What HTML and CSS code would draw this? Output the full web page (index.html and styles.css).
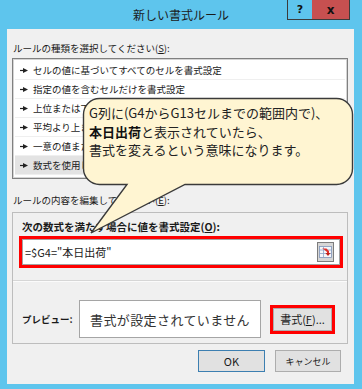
FILE: index.html
```html
<!DOCTYPE html>
<html lang="ja">
<head>
<meta charset="utf-8">
<title>新しい書式ルール</title>
<link rel="stylesheet" href="styles.css">
</head>
<body>
<div class="titlebar">
  <div class="title">新しい書式ルール</div>
  <div class="caption">
    <span class="help">?</span>
    <span class="close">x</span>
  </div>
</div>
<div class="dialog">
  <div class="label">ルールの種類を選択してください(<u>S</u>):</div>
  <div class="listbox">
    <div class="row"><svg class="arr" width="8" height="5" viewBox="0 0 8 5"><path d="M0 2.5H4" stroke="#222" stroke-width="1.2"/><path d="M3 0L8 2.5L3 5Z" fill="#222"/></svg><span>セルの値に基づいてすべてのセルを書式設定</span></div>
    <div class="row"><svg class="arr" width="8" height="5" viewBox="0 0 8 5"><path d="M0 2.5H4" stroke="#222" stroke-width="1.2"/><path d="M3 0L8 2.5L3 5Z" fill="#222"/></svg><span>指定の値を含むセルだけを書式設定</span></div>
    <div class="row"><svg class="arr" width="8" height="5" viewBox="0 0 8 5"><path d="M0 2.5H4" stroke="#222" stroke-width="1.2"/><path d="M3 0L8 2.5L3 5Z" fill="#222"/></svg><span>上位または下位に入る値だけを書式設定</span></div>
    <div class="row"><svg class="arr" width="8" height="5" viewBox="0 0 8 5"><path d="M0 2.5H4" stroke="#222" stroke-width="1.2"/><path d="M3 0L8 2.5L3 5Z" fill="#222"/></svg><span>平均より上または下の値だけを書式設定</span></div>
    <div class="row"><svg class="arr" width="8" height="5" viewBox="0 0 8 5"><path d="M0 2.5H4" stroke="#222" stroke-width="1.2"/><path d="M3 0L8 2.5L3 5Z" fill="#222"/></svg><span>一意の値または重複する値だけを書式設定</span></div>
    <div class="row sel"><svg class="arr" width="8" height="5" viewBox="0 0 8 5"><path d="M0 2.5H4" stroke="#222" stroke-width="1.2"/><path d="M3 0L8 2.5L3 5Z" fill="#222"/></svg><span>数式を使用して、書式設定するセルを決定</span></div>
  </div>
  <div class="label label2">ルールの内容を編集してください(<u>E</u>):</div>
  <div class="group">
    <div class="glabel">次の数式を満たす場合に値を書式設定(<u>O</u>):</div>
    <div class="formula-box">
      <div class="input">
        <span class="formula">=$G4="本日出荷"</span>
        <svg class="ref-icon" width="17" height="20" viewBox="0 0 17 20">
          <rect x="0.5" y="0.5" width="16" height="19" fill="#d6d6d6" stroke="#7c7c7c"/>
          <rect x="2.5" y="4.5" width="12" height="11" fill="#f4f6fa" stroke="#7f95b8" stroke-width="0.8"/>
          <path d="M2.5 8H14.5M2.5 11.5H14.5M6.5 4.5V15.5" stroke="#8fa6c8" stroke-width="0.8"/>
          <path d="M5 6.5L9.5 6.5L12 9L12 12.5L10 12.5L10 10L7 7.5Z" fill="#e0302a"/>
          <path d="M8.5 11L13.5 11L11 14Z" fill="#c0201a"/>
        </svg>
      </div>
    </div>
    <div class="sep"></div>
    <div class="preview-row">
      <div class="plabel">プレビュー:</div>
      <div class="preview">書式が設定されていません</div>
      <div class="fmt-wrap"><div class="btn fmt">書式(<u>F</u>)...</div></div>
    </div>
  </div>
  <div class="buttons">
    <div class="btn ok">OK</div>
    <div class="btn cancel">キャンセル</div>
  </div>
</div>
<svg class="callout-shape" width="362" height="389" viewBox="0 0 362 389">
  <path d="M99.5 98.5H336.5A16 16 0 0 1 352.5 114.5V168.5A16 16 0 0 1 336.5 184.5H185L91 233L127 184.5H99.5A16 16 0 0 1 83.5 168.5V114.5A16 16 0 0 1 99.5 98.5Z" fill="#fff5d2" stroke="#3a3a3a" stroke-width="1.4" stroke-linejoin="miter"/>
</svg>
<div class="callout-text">
  <div>G列に(G4からG13セルまでの範囲内で)、</div>
  <div><b>本日出荷</b>と表示されていたら、</div>
  <div>書式を変えるという意味になります。</div>
</div>
</body>
</html>
```
FILE: styles.css
```css
html, body {
  margin: 0;
  padding: 0;
}
body {
  width: 362px;
  height: 389px;
  background: #5ec5ed;
  font-family: "Noto Sans CJK JP", "Noto Sans", sans-serif;
  color: #1a1a1a;
  position: relative;
  overflow: hidden;
}
u {
  text-decoration: underline;
  text-underline-offset: 1px;
}
.titlebar {
  height: 29px;
  display: grid;
  grid-template-columns: 1fr auto 1fr;
}
.title {
  grid-column: 2;
  font-size: 12px;
  line-height: 29px;
  color: #1a1a1a;
}
.caption {
  grid-column: 3;
  justify-self: end;
  align-self: start;
  margin-right: 12px;
  display: flex;
  height: 19px;
  border: 1px solid #3b3b3b;
  border-top: 0;
}
.help, .close {
  display: flex;
  align-items: center;
  justify-content: center;
  font-family: "DejaVu Sans", sans-serif;
  font-weight: bold;
  color: #111;
}
.help {
  width: 24px;
  font-size: 11px;
}
.close {
  width: 37px;
  background: #c75050;
  font-size: 12px;
}
.dialog {
  margin-left: 7px;
  width: 347px;
  height: 355px;
  box-sizing: border-box;
  background: #f0f0f0;
  padding: 12px 6px 0 5px;
}
.label {
  font-size: 9.5px;
  line-height: 14px;
  margin-left: 1px;
  color: #1a1a1a;
}
.label2 {
  margin-top: 14px;
}
.listbox {
  margin-top: 3px;
  border: 1px solid #808080;
  box-shadow: inset 0 0 0 1px #d4d4d4;
  background: #fff;
  padding: 2px 2px 3px;
}
.row {
  height: 19px;
  box-sizing: border-box;
  display: flex;
  align-items: center;
  gap: 5px;
  padding-left: 5px;
  font-size: 9.5px;
  border-bottom: 1px solid #efefef;
  color: #1a1a1a;
}
.row.sel {
  background: #e3e3e3;
}
.arr {
  flex: none;
}
.group {
  margin-top: 5px;
  height: 132px;
  box-sizing: border-box;
  border: 1px solid #bdbdbd;
}
.glabel {
  font-size: 10.5px;
  font-weight: bold;
  line-height: 14px;
  margin: 7px 0 0 9px;
}
.formula-box {
  margin: 2px 4px 0 6px;
  border: 3px solid #ff0000;
  height: 32px;
  box-sizing: border-box;
}
.input {
  height: 26px;
  box-sizing: border-box;
  border: 1px solid #a3a3a3;
  background: #fff;
  display: flex;
  align-items: center;
  justify-content: space-between;
  padding: 0 5px 0 2px;
}
.formula {
  font-size: 11px;
  color: #1a1a1a;
}
.ref-icon {
  display: block;
}
.sep {
  margin-top: 12px;
  border-top: 1px solid #d6d6d6;
  border-bottom: 1px solid #fbfbfb;
}
.preview-row {
  display: flex;
  align-items: center;
  margin-top: 18px;
  padding-left: 9px;
}
.plabel {
  width: 57px;
  font-size: 9.5px;
  font-weight: bold;
}
.preview {
  width: 182px;
  height: 38px;
  box-sizing: border-box;
  border: 1px solid #a5a5a5;
  background: #fff;
  display: flex;
  align-items: center;
  justify-content: center;
  font-size: 13px;
  letter-spacing: 0.4px;
  color: #333;
}
.fmt-wrap {
  margin-left: 9px;
  width: 65px;
  height: 29px;
  box-sizing: border-box;
  border: 3px solid #ff0000;
  display: flex;
}
.btn {
  box-sizing: border-box;
  background: #e1e1e1;
  border: 1px solid #adadad;
  display: flex;
  align-items: center;
  justify-content: center;
  color: #1a1a1a;
}
.fmt {
  flex: 1;
  font-size: 11px;
}
.buttons {
  display: flex;
  justify-content: flex-end;
  gap: 10px;
  margin-top: 6px;
  padding-right: 7px;
}
.ok {
  width: 67px;
  height: 22px;
  border-color: #3c7fb1;
  font-size: 11px;
}
.cancel {
  width: 66px;
  height: 22px;
  font-size: 9px;
}
.callout-shape {
  position: absolute;
  left: 0;
  top: 0;
}
.callout-text {
  position: absolute;
  left: 89px;
  top: 104px;
  font-size: 13px;
  line-height: 18.5px;
  color: #222;
  white-space: nowrap;
}
.callout-text b {
  font-weight: bold;
  color: #111;
}
```
